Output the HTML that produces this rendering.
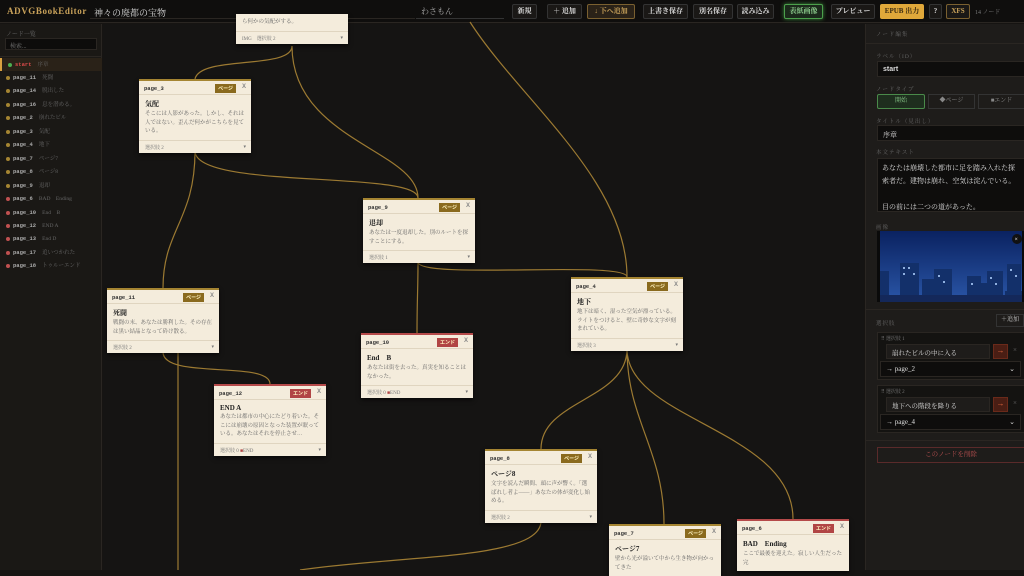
<!DOCTYPE html>
<html><head><meta charset="utf-8"><style>
*{box-sizing:border-box;margin:0;padding:0}
body{width:1024px;height:570px;overflow:hidden;background:#161412;font-family:"Liberation Serif","Noto Serif CJK SC","Noto Sans CJK JP",serif;color:#ccc;position:relative}
.hdr{position:absolute;left:0;top:0;width:1024px;height:23px;background:#0f0e0d;border-bottom:1px solid #2a2622}
.logo{position:absolute;left:7px;top:6px;font-size:9px;letter-spacing:0.6px;color:#c9a25a;font-weight:bold}
.ttl{position:absolute;left:90px;top:3px;width:325px;height:16px;font-size:9px;color:#ddd;padding:3px 4px;border-bottom:1px solid #2a2622}
.auth{position:absolute;left:416px;top:4px;width:88px;height:15px;font-size:8px;color:#aaa;padding:2px 5px;border-bottom:1px solid #333}
.btn{position:absolute;top:4px;height:15px;font-size:7px;line-height:13px;text-align:center;border:1px solid #333;border-radius:2px;background:#1a1816;color:#ddd;font-weight:bold}
.side{position:absolute;left:0;top:24px;width:102px;height:546px;background:#1a1815;border-right:1px solid #2a2622}
.side .lb{font-size:6px;color:#666;position:absolute;left:6px;top:5px}
.search{position:absolute;left:5px;top:14px;width:92px;height:12px;background:#0d0c0b;border:1px solid #2a2622;font-size:6px;color:#777;padding:2px 4px}
.item{position:absolute;left:0;width:102px;height:13px;font-size:5.5px;line-height:13px;padding-left:13px;color:#666}
.item b{color:#aaa;font-family:"Liberation Mono",monospace;margin-right:6px}
.item i{position:absolute;left:6px;top:5px;width:4px;height:4px;border-radius:50%}
.cv{position:absolute;left:103px;top:24px;width:761px;height:546px;background:#151413}
.card{position:absolute;width:112px;background:#f4ecdc;border-top:2px solid #a58532;box-shadow:0 2px 4px rgba(0,0,0,.6);font-size:5.5px;color:#666}
.card.e{border-top-color:#b54a4a}
.card .h{height:14px;border-bottom:1px solid #e0d5c0;position:relative;padding:4px 5px;font-family:"Liberation Mono",monospace;font-size:5.5px;color:#333;font-weight:bold}
.bd{position:absolute;right:15px;top:3px;background:#8a6a1e;color:#fff2c0;font-size:5px;padding:1px 3px;font-family:"Noto Sans CJK JP",sans-serif}
.e .bd{background:#b14545}
.x{position:absolute;right:5px;top:3px;color:#888;font-size:6px;font-family:"Liberation Sans",sans-serif}
.card .t{font-weight:bold;color:#222;font-size:7px;padding:4px 6px 1px}
.card .p{padding:0 6px 4px;line-height:8.5px;font-size:5.5px;color:#666}
.card .f{border-top:1px solid #e0d5c0;height:13px;padding:3px 6px;font-size:5px;color:#777;position:relative}
.card .f:after{content:"▾";position:absolute;right:5px;top:3px}
.rp{position:absolute;left:865px;top:24px;width:159px;height:546px;background:#1e1c1a;border-left:1px solid #2a2622}
.rl{position:absolute;left:10px;font-size:5.5px;color:#666;letter-spacing:1px}
.in{position:absolute;left:11px;width:148px;background:#0e0d0c;border:1px solid #2a2622;color:#ddd;font-size:7px;padding:4px 5px}
</style></head><body>
<div class="hdr">
<div class="logo">ADVGBookEditor</div>
<div class="ttl">神々の廃都の宝物</div>
<div class="auth">わさもん</div>
<div class="btn" style="left:512px;width:25px">新規</div>
<div class="btn" style="left:547px;width:35px">＋ 追加</div>
<div class="btn" style="left:587px;width:48px;border-color:#7a6030;color:#c9a25a;background:#2a2218">↓ 下へ追加</div>
<div class="btn" style="left:643px;width:45px">上書き保存</div>
<div class="btn" style="left:693px;width:40px">別名保存</div>
<div class="btn" style="left:737px;width:37px">読み込み</div>
<div class="btn" style="left:784px;width:39px;border-color:#4ca04c;color:#8fd08f;background:#1b2a1b;box-shadow:0 0 4px #3a8a3a">表紙画像</div>
<div class="btn" style="left:831px;width:44px">プレビュー</div>
<div class="btn" style="left:880px;width:44px;background:#e0a83a;color:#3a2a10;border-color:#e0a83a">EPUB 出力</div>
<div class="btn" style="left:929px;width:13px">?</div>
<div class="btn" style="left:946px;width:24px;border-color:#7a6030;color:#c9a25a">XFS</div>
<div style="position:absolute;left:975px;top:7px;font-size:6px;color:#777">14 ノード</div>
</div>
<div class="side">
<div class="lb">ノード一覧</div>
<div class="search">検索...</div>
<div style="position:absolute;left:0;top:32px;width:102px;border-top:1px solid #2a2622"></div>
<div class="item" style="top:34px;background:#2a2218;border-left:2px solid #d8a040"><i style="background:#4caf50"></i><b style="color:#d84a4a">start</b>序章</div>
<div class="item" style="top:47px"><i style="background:#a58532"></i><b>page_11</b>死闘</div>
<div class="item" style="top:60px"><i style="background:#a58532"></i><b>page_14</b>脱出した</div>
<div class="item" style="top:74px"><i style="background:#a58532"></i><b>page_16</b>息を潜める。</div>
<div class="item" style="top:87px"><i style="background:#a58532"></i><b>page_2</b>崩れたビル</div>
<div class="item" style="top:101px"><i style="background:#a58532"></i><b>page_3</b>気配</div>
<div class="item" style="top:114px"><i style="background:#a58532"></i><b>page_4</b>地下</div>
<div class="item" style="top:128px"><i style="background:#a58532"></i><b>page_7</b>ページ7</div>
<div class="item" style="top:141px"><i style="background:#a58532"></i><b>page_8</b>ページ8</div>
<div class="item" style="top:155px"><i style="background:#a58532"></i><b>page_9</b>退却</div>
<div class="item" style="top:168px"><i style="background:#c05050"></i><b>page_6</b>BAD　Ending</div>
<div class="item" style="top:182px"><i style="background:#c05050"></i><b>page_10</b>End　B</div>
<div class="item" style="top:195px"><i style="background:#c05050"></i><b>page_12</b>END A</div>
<div class="item" style="top:208px"><i style="background:#c05050"></i><b>page_13</b>End D</div>
<div class="item" style="top:222px"><i style="background:#c05050"></i><b>page_17</b>追いつかれた</div>
<div class="item" style="top:235px"><i style="background:#c05050"></i><b>page_18</b>トゥルーエンド</div>
</div>
<div class="cv"></div>
<svg style="position:absolute;left:0;top:0" width="1024" height="570" fill="none" stroke="#9c7a32" stroke-width="1.2">
<path d="M292 46 C292 70 200 55 195 79"/>
<path d="M292 46 C292 140 418 150 418 198"/>
<path d="M470 22 C520 100 627 180 627 277"/>
<path d="M195 151 C195 220 163 230 163 288"/>
<path d="M195 151 C195 190 418 170 418 198"/>
<path d="M418 262 C418 290 417 300 417 333"/>
<path d="M418 262 C418 280 627 260 627 277"/>
<path d="M163 352 C163 380 270 360 270 384"/>
<path d="M178 352 C178 420 178 500 178 570"/>
<path d="M627 349 C627 400 541 400 541 449"/>
<path d="M627 349 C627 420 664 450 664 524"/>
<path d="M627 349 C627 420 793 430 793 519"/>
<path d="M541 521 C541 560 400 555 300 570"/>
</svg>
<div class="card" style="left:236px;top:14px;border-top:none"><div class="p" style="padding-top:4px">ら何かの気配がする。</div><div class="f">IMG　選択肢 2</div></div>
<div class="card" style="left:139px;top:79px"><div class="h">page_3<span class="bd">ページ</span><span class="x">X</span></div><div class="t">気配</div><div class="p">そこには人影があった。しかし、それは人ではない。歪んだ何かがこちらを見ている。</div><div class="f">選択肢 2</div></div>
<div class="card" style="left:363px;top:198px"><div class="h">page_9<span class="bd">ページ</span><span class="x">X</span></div><div class="t">退却</div><div class="p">あなたは一度退却した。別のルートを探すことにする。</div><div class="f">選択肢 1</div></div>
<div class="card" style="left:107px;top:288px"><div class="h">page_11<span class="bd">ページ</span><span class="x">X</span></div><div class="t">死闘</div><div class="p">戦闘の末、あなたは勝利した。その存在は黒い結晶となって砕け散る。</div><div class="f">選択肢 2</div></div>
<div class="card" style="left:571px;top:277px"><div class="h">page_4<span class="bd">ページ</span><span class="x">X</span></div><div class="t">地下</div><div class="p">地下は暗く、湿った空気が漂っている。ライトをつけると、壁に奇妙な文字が刻まれている。</div><div class="f">選択肢 3</div></div>
<div class="card e" style="left:361px;top:333px"><div class="h">page_10<span class="bd">エンド</span><span class="x">X</span></div><div class="t">End　B</div><div class="p">あなたは街を去った。真実を知ることはなかった。</div><div class="f">選択肢 0 <span style="color:#b14545">■</span>END</div></div>
<div class="card e" style="left:214px;top:384px"><div class="h">page_12<span class="bd">エンド</span><span class="x">X</span></div><div class="t">END A</div><div class="p">あなたは都市の中心にたどり着いた。そこには崩壊の原因となった装置が眠っている。あなたはそれを停止させ…</div><div class="f">選択肢 0 <span style="color:#b14545">■</span>END</div></div>
<div class="card" style="left:485px;top:449px"><div class="h">page_8<span class="bd">ページ</span><span class="x">X</span></div><div class="t">ページ8</div><div class="p">文字を読んだ瞬間、頭に声が響く。「選ばれし者よ――」あなたの体が変化し始める。</div><div class="f">選択肢 2</div></div>
<div class="card" style="left:609px;top:524px"><div class="h">page_7<span class="bd">ページ</span><span class="x">X</span></div><div class="t">ページ7</div><div class="p">壁から光が溢いて中から生き物が向かってきた</div></div>
<div class="card e" style="left:737px;top:519px"><div class="h">page_6<span class="bd">エンド</span><span class="x">X</span></div><div class="t">BAD　Ending</div><div class="p">ここで最後を迎えた。寂しい人生だった 完</div></div>
<div class="rp">
<div class="rl" style="top:6px">ノード編集</div>
<div style="position:absolute;left:0;top:19px;width:159px;border-top:1px solid #2a2622"></div>
<div class="rl" style="top:28px">ラベル（ID）</div>
<div class="in" style="top:37px;height:16px;font-family:'Liberation Sans',sans-serif;font-weight:bold">start</div>
<div class="rl" style="top:61px">ノードタイプ</div>
<div style="position:absolute;left:11px;top:70px;width:48px;height:15px;border:1px solid #4a8a4a;background:#1e2e1e;color:#8fd08f;font-size:6px;text-align:center;line-height:13px;border-radius:2px">開始</div>
<div style="position:absolute;left:62px;top:70px;width:47px;height:15px;border:1px solid #333;color:#888;font-size:6px;text-align:center;line-height:13px">◆ページ</div>
<div style="position:absolute;left:112px;top:70px;width:47px;height:15px;border:1px solid #333;color:#888;font-size:6px;text-align:center;line-height:13px">■エンド</div>
<div class="rl" style="top:93px">タイトル（見出し）</div>
<div class="in" style="top:101px;height:16px">序章</div>
<div class="rl" style="top:124px">本文テキスト</div>
<div class="in" style="top:134px;height:54px;line-height:13px;padding:3px 4px">あなたは崩壊した都市に足を踏み入れた探索者だ。建物は崩れ、空気は淀んでいる。<br><br>目の前には二つの道があった。</div>
<div class="rl" style="top:199px">画像</div>
<svg style="position:absolute;left:11px;top:207px" width="148" height="71"><defs><linearGradient id="g" x1="0" y1="0" x2="0" y2="1"><stop offset="0" stop-color="#0a2260"/><stop offset="1" stop-color="#2a56a8"/></linearGradient></defs><rect width="148" height="71" fill="url(#g)"/><g fill="#13306a"><rect x="2" y="40" width="10" height="31"/><rect x="23" y="32" width="19" height="39"/><rect x="45" y="48" width="15" height="23"/><rect x="57" y="38" width="18" height="33"/><rect x="90" y="45" width="14" height="26"/><rect x="104" y="52" width="13" height="19"/><rect x="110" y="40" width="16" height="31"/><rect x="128" y="60" width="18" height="11"/><rect x="130" y="33" width="14" height="38"/></g><g fill="#8fb0e0"><rect x="26" y="36" width="2" height="2"/><rect x="31" y="36" width="2" height="2"/><rect x="26" y="42" width="2" height="2"/><rect x="36" y="42" width="2" height="2"/><rect x="61" y="44" width="2" height="2"/><rect x="66" y="50" width="2" height="2"/><rect x="113" y="46" width="2" height="2"/><rect x="118" y="52" width="2" height="2"/><rect x="133" y="38" width="2" height="2"/><rect x="138" y="44" width="2" height="2"/><rect x="94" y="52" width="2" height="2"/></g><rect x="0" y="64" width="148" height="7" fill="#14285a"/><rect x="0" y="0" width="3" height="71" fill="#0a0a0a"/><rect x="145" y="0" width="3" height="71" fill="#0a0a0a"/><circle cx="140" cy="8" r="5" fill="#111"/><text x="137.5" y="10" font-size="6" fill="#fff">×</text></svg>
<div style="position:absolute;left:0;top:285px;width:159px;border-top:1px solid #2a2622"></div>
<div class="rl" style="top:295px">選択肢</div>
<div style="position:absolute;left:130px;top:290px;width:28px;height:13px;border:1px solid #333;font-size:6px;color:#ccc;text-align:center;line-height:11px">＋追加</div>
<div style="position:absolute;left:11px;top:308px;width:148px;height:48px;background:#141311;border:1px solid #2a2622"></div>
<div style="position:absolute;left:15px;top:311px;font-size:5px;color:#777">⠿ 選択肢 1</div>
<div class="in" style="left:20px;top:320px;width:104px;height:15px;font-size:6.5px;padding:3px 5px;background:#1e1c1a">崩れたビルの中に入る</div>
<div style="position:absolute;left:127px;top:320px;width:15px;height:15px;background:#4a1e14;border:1px solid #6a2a1a;color:#e06a40;font-size:8px;text-align:center;line-height:12px">→</div>
<div style="position:absolute;left:147px;top:322px;font-size:7px;color:#666">×</div>
<div class="in" style="left:14px;top:337px;width:141px;height:16px;font-size:7px;padding:3px 5px">→ page_2<span style="float:right">⌄</span></div>
<div style="position:absolute;left:11px;top:361px;width:148px;height:48px;background:#141311;border:1px solid #2a2622"></div>
<div style="position:absolute;left:15px;top:364px;font-size:5px;color:#777">⠿ 選択肢 2</div>
<div class="in" style="left:20px;top:373px;width:104px;height:15px;font-size:6.5px;padding:3px 5px;background:#1e1c1a">地下への階段を降りる</div>
<div style="position:absolute;left:127px;top:373px;width:15px;height:15px;background:#4a1e14;border:1px solid #6a2a1a;color:#e06a40;font-size:8px;text-align:center;line-height:12px">→</div>
<div style="position:absolute;left:147px;top:375px;font-size:7px;color:#666">×</div>
<div class="in" style="left:14px;top:390px;width:141px;height:16px;font-size:7px;padding:3px 5px">→ page_4<span style="float:right">⌄</span></div>
<div style="position:absolute;left:0;top:416px;width:159px;border-top:1px solid #2a2622"></div>
<div style="position:absolute;left:11px;top:423px;width:148px;height:16px;border:1px solid #5a2a2a;color:#b85050;font-size:6.5px;text-align:center;line-height:14px">このノードを削除</div>
</div>
</body></html>
